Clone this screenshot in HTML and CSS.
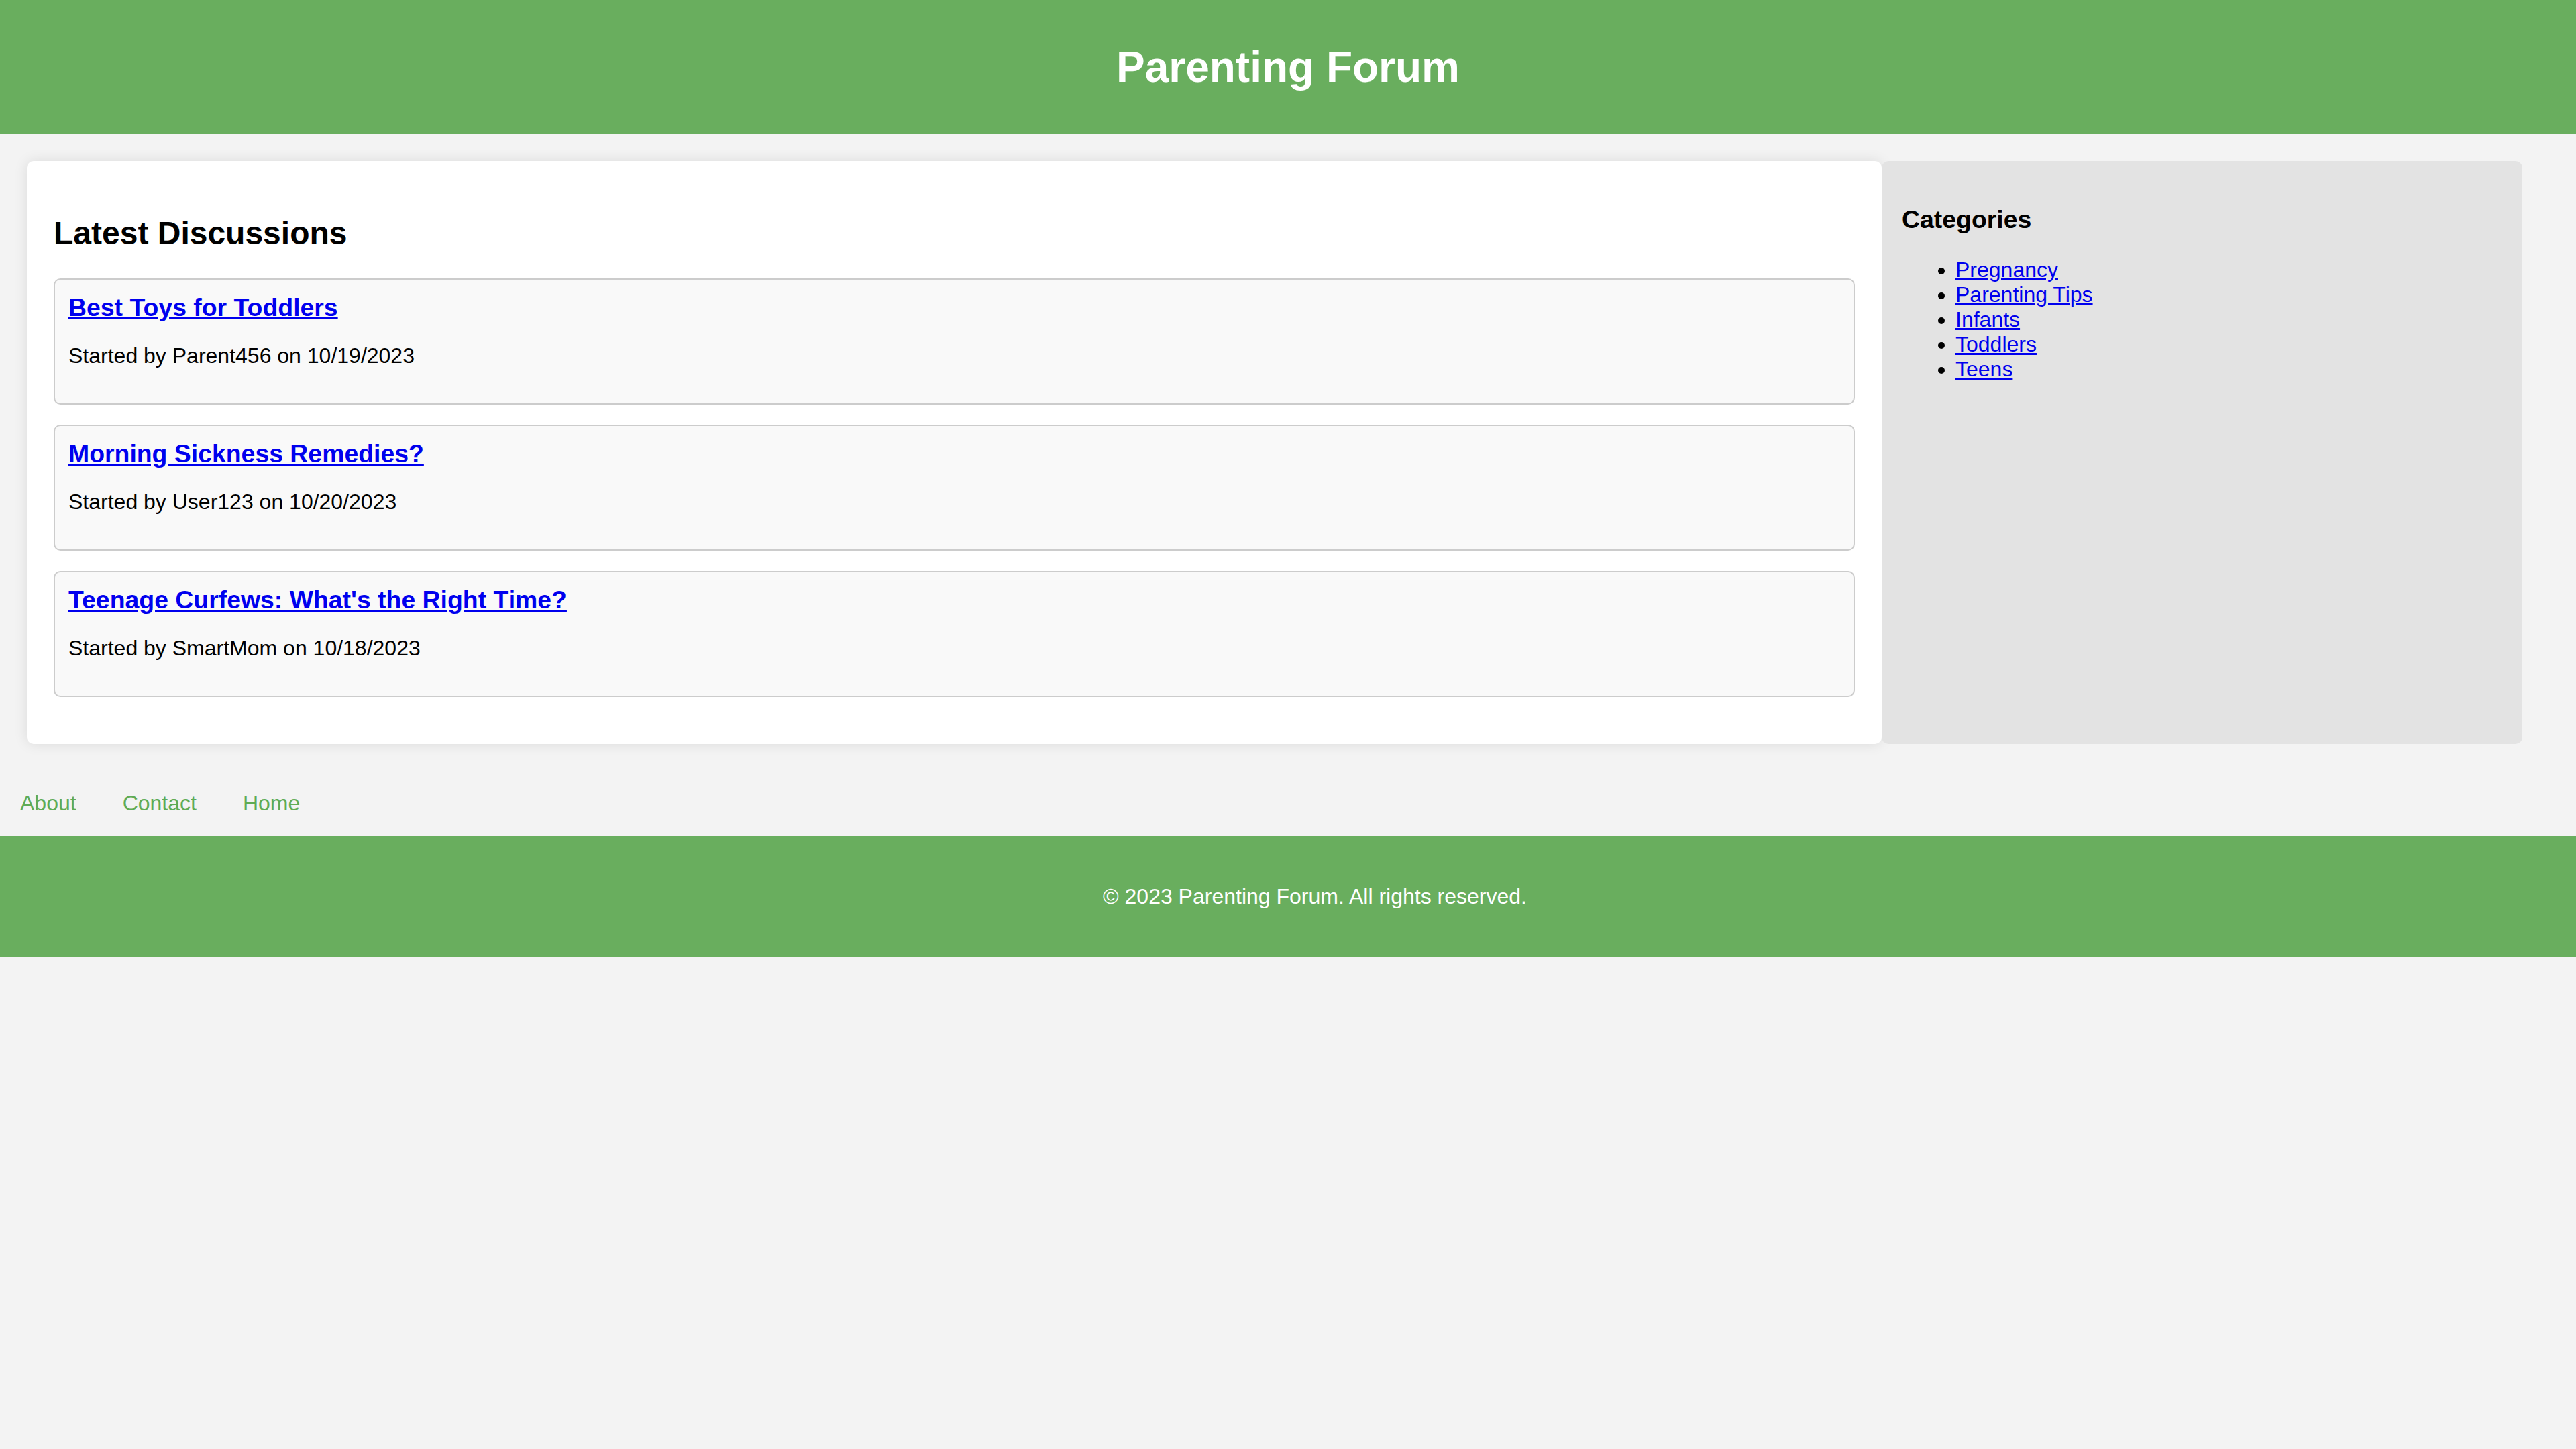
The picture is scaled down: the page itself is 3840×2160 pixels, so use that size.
FILE: index.html
```html
<!DOCTYPE html>
<html lang="en">
<head>
<meta charset="utf-8">
<title>Parenting Forum</title>
<link rel="stylesheet" href="styles.css">
</head>
<body>
<header class="site-header">
  <h1>Parenting Forum</h1>
</header>
<div class="container">
  <main class="card">
    <h2>Latest Discussions</h2>
    <div class="discussion">
      <h3><a href="#">Best Toys for Toddlers</a></h3>
      <p>Started by Parent456 on 10/19/2023</p>
    </div>
    <div class="discussion">
      <h3><a href="#">Morning Sickness Remedies?</a></h3>
      <p>Started by User123 on 10/20/2023</p>
    </div>
    <div class="discussion">
      <h3><a href="#">Teenage Curfews: What's the Right Time?</a></h3>
      <p>Started by SmartMom on 10/18/2023</p>
    </div>
  </main>
  <aside class="sidebar">
    <h3>Categories</h3>
    <ul>
      <li><a href="#">Pregnancy</a></li>
      <li><a href="#">Parenting Tips</a></li>
      <li><a href="#">Infants</a></li>
      <li><a href="#">Toddlers</a></li>
      <li><a href="#">Teens</a></li>
    </ul>
  </aside>
</div>
<nav class="links">
  <a href="#">About</a>
  <a href="#">Contact</a>
  <a href="#">Home</a>
</nav>
<footer class="site-footer">
  <p>© 2023 Parenting Forum. All rights reserved.</p>
</footer>
</body>
</html>
```

FILE: styles.css
```css
html, body {
  margin: 0;
  padding: 0;
}

body {
  background: #f3f3f3;
  font-family: "Liberation Sans", Arial, sans-serif;
  font-size: 32px;
  color: #000;
}

.site-header {
  background: #69ae5e;
  color: #fff;
  text-align: center;
  padding: 20px;
}

.site-header h1 {
  font-size: 64px;
  margin: 43px 0;
}

.container {
  display: flex;
  align-items: stretch;
  padding: 40px 80px 40px 40px;
}

.card {
  flex: 3 1 0;
  background: #fff;
  padding: 40px;
  border-radius: 10px;
  box-shadow: 0 0 20px rgba(0, 0, 0, 0.1);
}

.card h2 {
  font-size: 48px;
  margin: 40px 0 40px;
}

.discussion {
  background: #f9f9f9;
  border: 2px solid #ccc;
  border-radius: 10px;
  padding: 20px;
  margin-bottom: 30px;
}

.discussion h3 {
  font-size: 37.4px;
  margin: 0;
}

.discussion p {
  margin: 32px 0;
}

.sidebar {
  flex: 1 1 0;
  background: #e3e3e3;
  padding: 30px;
  border-radius: 10px;
}

.sidebar h3 {
  font-size: 37.4px;
  margin: 36px 0 33px;
}

.sidebar ul {
  margin: 35px 0 32px;
  padding-left: 80px;
}

a {
  color: #0000ee;
}

.links {
  display: flex;
  gap: 69px;
  padding: 30px 30px;
}

.links a {
  color: #5fab55;
  text-decoration: none;
}

.site-footer {
  background: #69ae5e;
  color: #fff;
  text-align: center;
  padding: 40px 0 40px 80px;
}

.site-footer p {
  margin: 32px 0;
}
```
